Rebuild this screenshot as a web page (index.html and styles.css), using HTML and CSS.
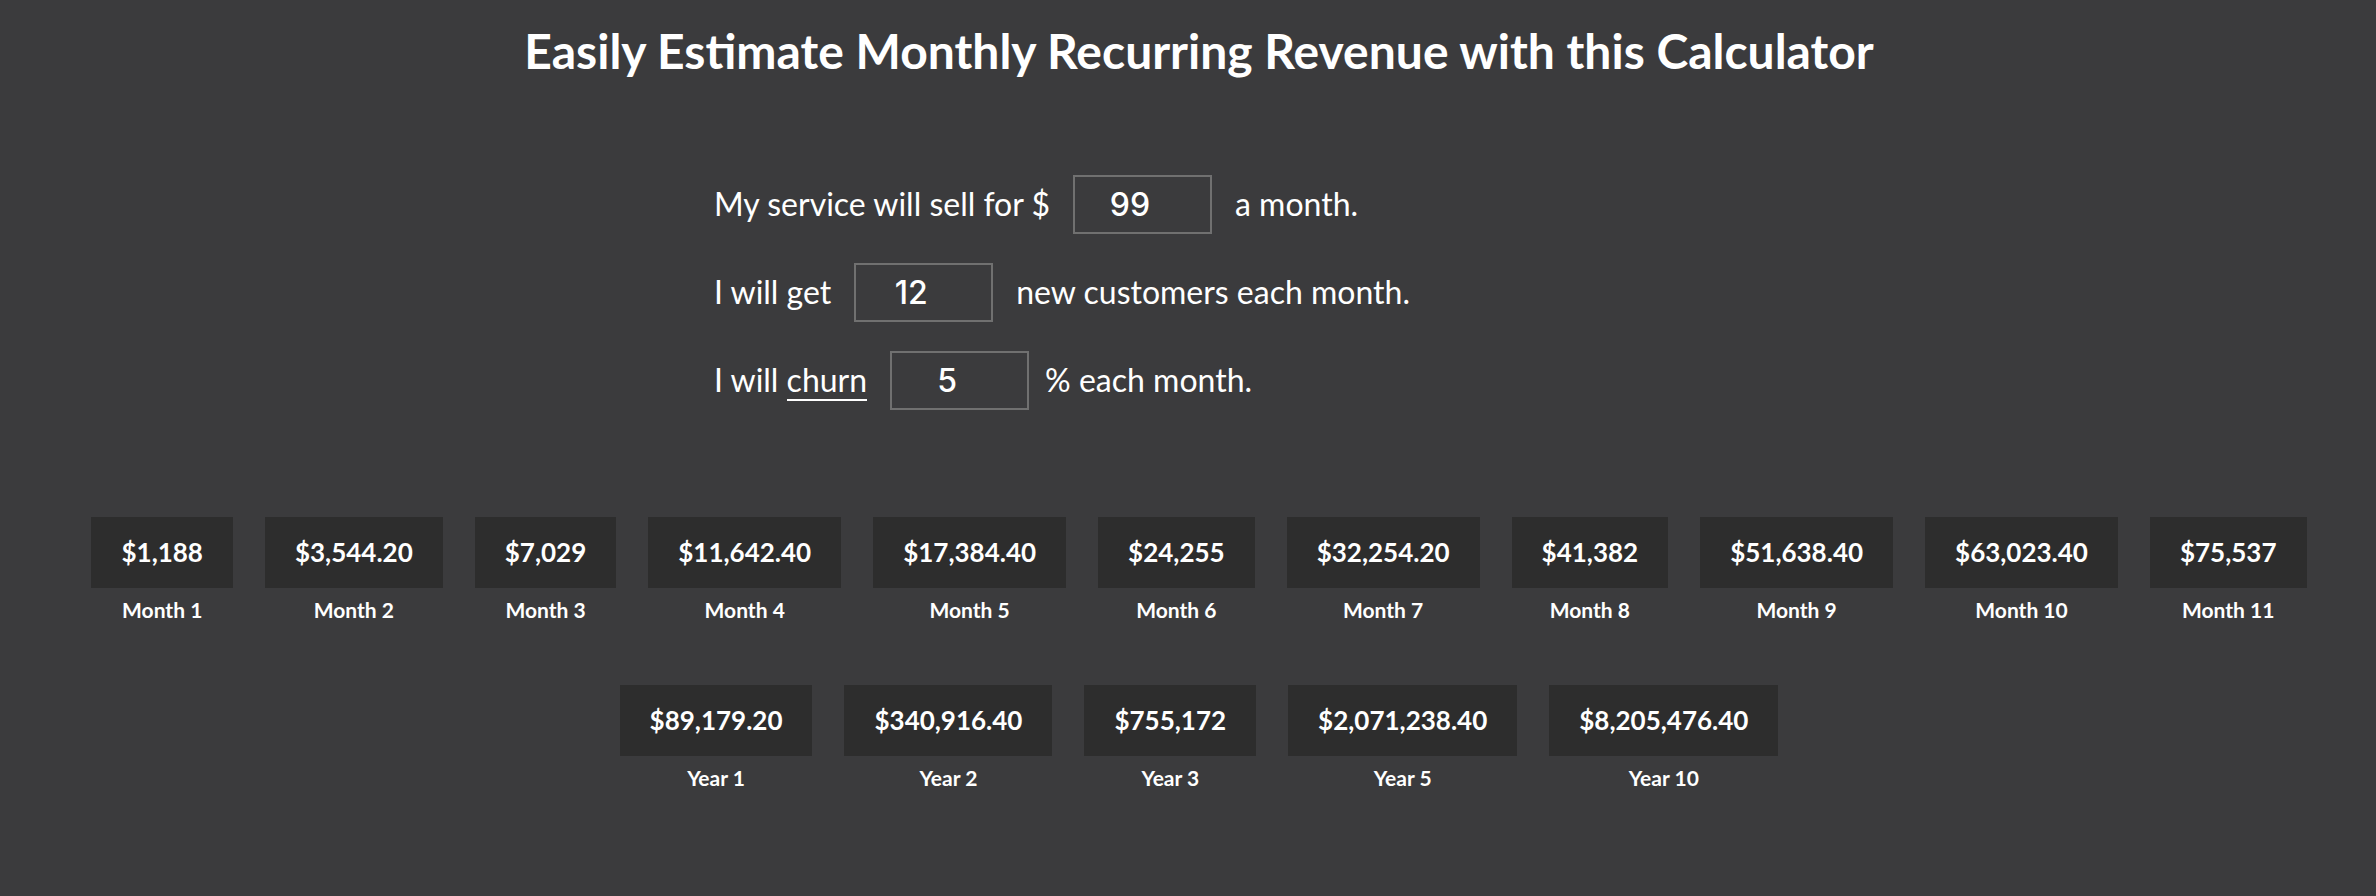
FILE: index.html
```html
<!DOCTYPE html>
<html lang="en">
  <head>
    <meta charset="UTF-8" />
    <meta name="viewport" content="width=device-width, initial-scale=1.0" />
    <title>MRR Calculator</title>
    <link rel="stylesheet" href="styles.css">
  </head>
  <body>
    <div class="page">
      <h1 class="titulo">Easily Estimate Monthly Recurring Revenue with this Calculator</h1>

      <div class="form">
        <div class="fila">
          <span>My service will sell for $</span>
          <input class="campo" type="text" value="99">
          <span>a month.</span>
        </div>
        <div class="fila">
          <span>I will get</span>
          <input class="campo" type="text" value="12">
          <span>new customers each month.</span>
        </div>
        <div class="fila">
          <span>I will <span class="churn">churn</span></span>
          <input class="campo campo-pct" type="text" value="5">
          <span>% each month.</span>
        </div>
      </div>

      <div class="resultados meses">
        <div class="item"><div class="monto">$1,188</div><div class="etiqueta">Month 1</div></div>
        <div class="item"><div class="monto">$3,544.20</div><div class="etiqueta">Month 2</div></div>
        <div class="item"><div class="monto">$7,029</div><div class="etiqueta">Month 3</div></div>
        <div class="item"><div class="monto">$11,642.40</div><div class="etiqueta">Month 4</div></div>
        <div class="item"><div class="monto">$17,384.40</div><div class="etiqueta">Month 5</div></div>
        <div class="item"><div class="monto">$24,255</div><div class="etiqueta">Month 6</div></div>
        <div class="item"><div class="monto">$32,254.20</div><div class="etiqueta">Month 7</div></div>
        <div class="item"><div class="monto">$41,382</div><div class="etiqueta">Month 8</div></div>
        <div class="item"><div class="monto">$51,638.40</div><div class="etiqueta">Month 9</div></div>
        <div class="item"><div class="monto">$63,023.40</div><div class="etiqueta">Month 10</div></div>
        <div class="item"><div class="monto">$75,537</div><div class="etiqueta">Month 11</div></div>
      </div>

      <div class="resultados anios">
        <div class="item"><div class="monto">$89,179.20</div><div class="etiqueta">Year 1</div></div>
        <div class="item"><div class="monto">$340,916.40</div><div class="etiqueta">Year 2</div></div>
        <div class="item"><div class="monto">$755,172</div><div class="etiqueta">Year 3</div></div>
        <div class="item"><div class="monto">$2,071,238.40</div><div class="etiqueta">Year 5</div></div>
        <div class="item"><div class="monto">$8,205,476.40</div><div class="etiqueta">Year 10</div></div>
      </div>
    </div>
  </body>
</html>
```

FILE: styles.css
```css
body {
  margin: 0;
  background-color: #3b3b3d;
  color: #ffffff;
  font-family: Lato, "Noto Sans", sans-serif;
}

.page {
  padding: 22px 0 40px 22px;
}

.titulo {
  margin: 0;
  font-size: 48px;
  font-weight: 700;
  line-height: 1.2;
  text-align: center;
}

.form {
  width: 970px;
  margin: 95px auto 0;
  display: flex;
  flex-direction: column;
  gap: 29px;
}

.fila {
  display: flex;
  align-items: center;
  font-size: 32px;
  line-height: 1.2;
}

.churn {
  border-bottom: 2px solid #ffffff;
}

.campo {
  box-sizing: border-box;
  width: 139px;
  height: 59px;
  margin: 0 23px;
  padding: 0 25px 0 0;
  border: 2px solid #707070;
  background: transparent;
  color: #ffffff;
  font-family: Inter, "Liberation Sans", sans-serif;
  font-size: 32px;
  font-weight: 500;
  text-align: center;
  outline: none;
}

.campo-pct {
  margin-right: 16px;
}

.resultados {
  display: flex;
  flex-wrap: wrap;
  justify-content: center;
  gap: 63px 32px;
}

.meses {
  margin-top: 107px;
}

.anios {
  margin-top: 63px;
}

.item {
  display: flex;
  flex-direction: column;
  align-items: center;
}

.monto {
  background-color: #2d2d2d;
  padding: 20px 30px;
  font-size: 26px;
  font-weight: 700;
  line-height: 31px;
}

.etiqueta {
  margin-top: 9px;
  font-size: 21px;
  font-weight: 700;
  line-height: 25px;
}
```
